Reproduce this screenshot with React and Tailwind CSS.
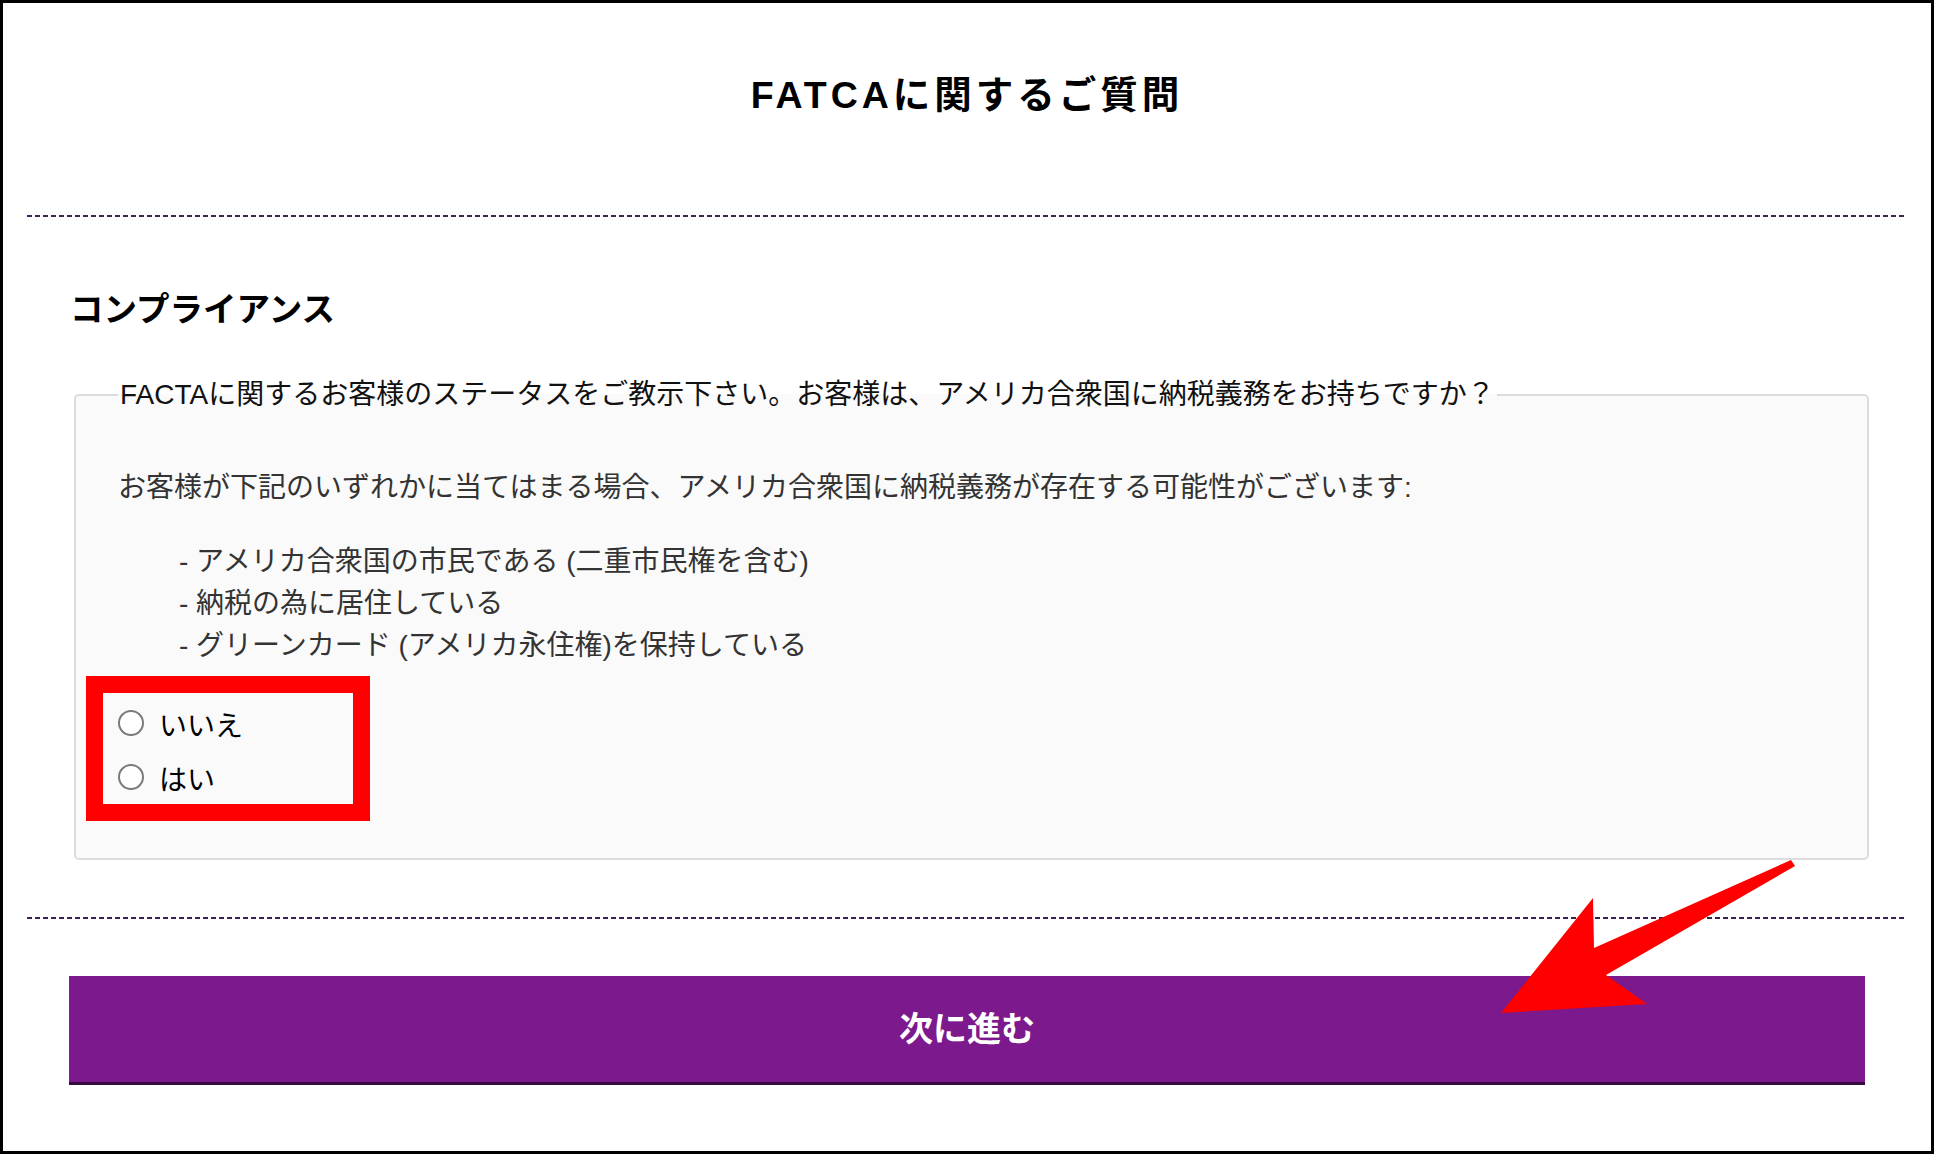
import React from "react";

const FONT = { fontFamily: '"Liberation Sans", "Noto Sans CJK JP", sans-serif' };

function Dashed() {
  return (
    <div className="h-[2px] w-full bg-[repeating-linear-gradient(to_right,#3b2150_0_5px,transparent_5px_8px)]" />
  );
}

function Radio({ label }) {
  return (
    <label className="flex h-[54px] items-center">
      <input
        type="radio"
        name="fatca"
        className="m-0 h-[26px] w-[26px] shrink-0 appearance-none rounded-full border-2 border-[#7a7a7a] bg-white"
      />
      <span className="ml-[15px] pt-[7px] text-[28px] leading-[40px] text-black">{label}</span>
    </label>
  );
}

export default function App() {
  return (
    <div
      className="relative box-border h-[1154px] w-full overflow-hidden border-[3px] border-black bg-white px-[24px]"
      style={FONT}
    >
      <h1 className="mt-[70px] text-center text-[37.5px] font-bold leading-[44px] tracking-[4px] text-black">
        FATCAに関するご質問
      </h1>
      <div className="mt-[98px]">
        <Dashed />
      </div>

      <h2 className="ml-[43px] mt-[73px] text-[33.5px] font-bold leading-[40px] text-black">
        コンプライアンス
      </h2>

      <fieldset className="ml-[47px] mr-[38px] mt-[45px] rounded-[5px] border-2 border-[#dcdcdc] bg-[#fafafa] pb-[54px] pl-[42px]">
        <legend className="px-[2px] text-[28px] leading-[40px] text-[#111]">
          FACTAに関するお客様のステータスをご教示下さい。お客様は、アメリカ合衆国に納税義務をお持ちですか？
        </legend>
        <p className="mt-[53px] text-[28px] leading-[40px] text-[#333]">
          お客様が下記のいずれかに当てはまる場合、アメリカ合衆国に納税義務が存在する可能性がございます:
        </p>
        <ul className="mt-[33px] pl-[61px] text-[28px] leading-[42px] text-[#333]">
          <li>- アメリカ合衆国の市民である (二重市民権を含む)</li>
          <li>- 納税の為に居住している</li>
          <li>- グリーンカード (アメリカ永住権)を保持している</li>
        </ul>
        <div className="relative mt-[29px] w-fit">
          <Radio label="いいえ" />
          <Radio label="はい" />
          <div className="pointer-events-none absolute left-[-32px] top-[-20px] h-[145px] w-[284px] border-[17px] border-[#ff0000]" />
        </div>
      </fieldset>

      <div className="mt-[57px]">
        <Dashed />
      </div>

      <button
        type="button"
        className="ml-[42px] mr-[42px] mt-[57px] box-border flex h-[109px] w-[calc(100%-84px)] items-center justify-center border-b-[3px] border-[#360b3d] bg-[#7c198c] text-[34px] font-bold text-white"
      >
        次に進む
      </button>

      <svg
        className="pointer-events-none absolute left-[-3px] top-[-3px] h-[1154px] w-[1934px]"
        viewBox="0 0 1934 1154"
      >
        <polygon
          fill="#ff0000"
          points="1791,860 1795,866 1606,975 1647,1004 1501,1013 1593,898 1594,948"
        />
      </svg>
    </div>
  );
}
